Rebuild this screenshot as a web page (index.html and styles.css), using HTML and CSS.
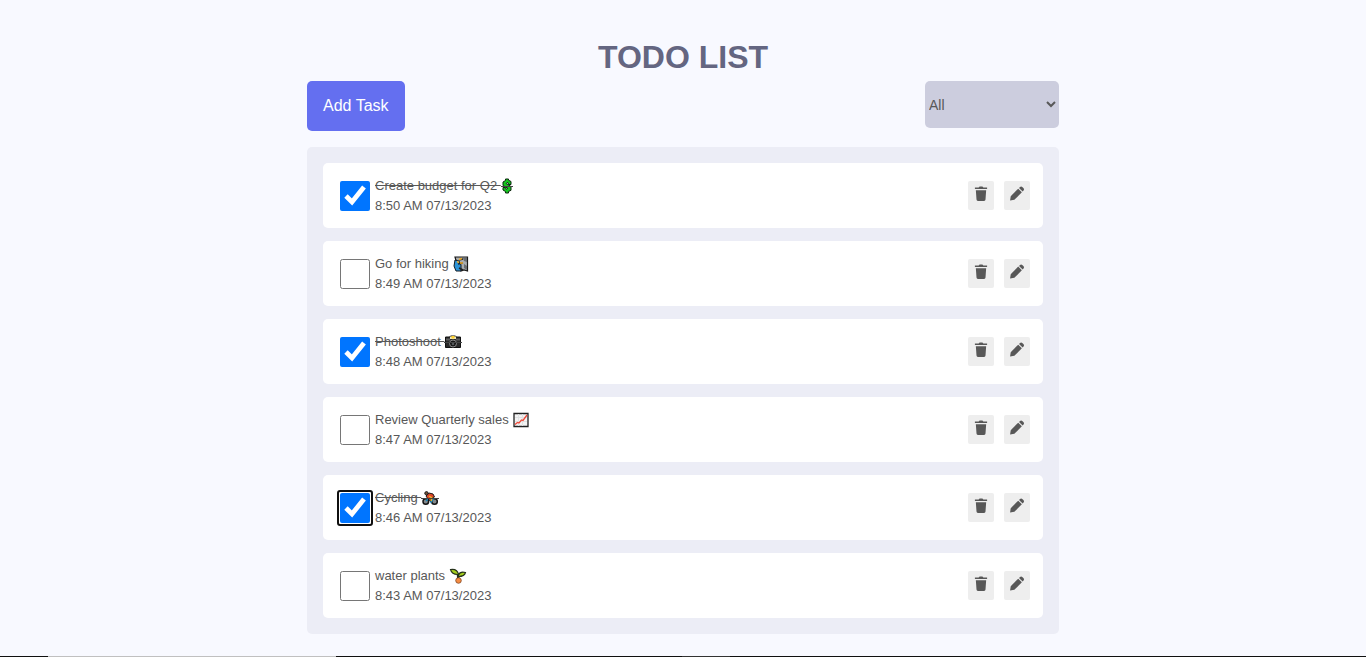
FILE: index.html
```
<!DOCTYPE html>
<html lang="en">
<head>
<meta charset="utf-8">
<meta name="viewport" content="width=device-width, initial-scale=1">
<title>Todo List</title>
<link rel="stylesheet" href="styles.css">
</head>
<body>
<svg class="sprite" aria-hidden="true">
  <symbol id="trash" viewBox="0 0 14 16">
    <path d="M.5 1.500h4l1-1h3l1 1h4v1.800H.5z"/>
    <path d="M1.500 4.500h11l-.7 10Q11.700 16 10.300 16H3.700Q2.300 16 2.200 14.500z"/>
  </symbol>
  <symbol id="pencil" viewBox="0 0 16 16">
    <path d="M.6 15.400l.7-4.600 8-8 3.900 3.900-8 8z"/>
    <path d="M10.200 2l1-1q1.300-1.100 2.700.2l.9.900q1.300 1.400.2 2.700l-1 1z"/>
  </symbol>
</svg>
<main class="page">
  <h1 class="title">TODO LIST</h1>
  <div class="toolbar">
    <button class="add" type="button">Add Task</button>
    <select class="filter" aria-label="Filter tasks">
      <option>All</option>
      <option>Incomplete</option>
      <option>Complete</option>
    </select>
  </div>
  <ul class="list">
    <li class="task">
      <input class="check" type="checkbox" id="t1" checked>
      <div class="info">
        <label class="name done" for="t1">Create budget for Q2 <svg class="emoji narrow" viewBox="0 0 10 16" role="img" aria-label="dollar"><path d="M3.500 1h3v1.200L9 3.500v3H6.500V5.200L5 4.500l-.8 1 4.800 3v3.800l-2.500 1.200V15h-3v-1.500L1 12V9.500h2.500v1l1.500.7.800-1L1 7.500V4l2.500-1.500z" fill="#12c81c" stroke="#0b260d" stroke-width="1"/><path class="strike" d="M-1 8.500h12"/></svg></label>
        <p class="time">8:50 AM 07/13/2023</p>
      </div>
      <div class="actions">
        <button class="action" type="button" aria-label="Delete"><svg class="trash"><use href="#trash"/></svg></button>
        <button class="action" type="button" aria-label="Edit"><svg class="pencil"><use href="#pencil"/></svg></button>
      </div>
    </li>
    <li class="task">
      <input class="check" type="checkbox" id="t2">
      <div class="info">
        <label class="name" for="t2">Go for hiking <svg class="emoji" viewBox="0 0 16 16" role="img" aria-label="hiking"><path d="M2 1h12.500v14L11 14 8 15 4 8z" fill="#a9adb0" stroke="#191919" stroke-width="1.200"/><path d="M10 2h4v4l-3-1zM11 8l3 2v4l-3-2z" fill="#686d71"/><path d="M2 4l4 1 2 4v6H3L1 10z" fill="#2c93d6" stroke="#141b22"/><path d="M6 4l4-1M5 8l5-1M6 12l4 2" stroke="#222" stroke-width="1.500"/><path d="M6 3.500l3-1M7 7h3M4 5.500l2 1" stroke="#f0ad27" stroke-width="1.500"/></svg></label>
        <p class="time">8:49 AM 07/13/2023</p>
      </div>
      <div class="actions">
        <button class="action" type="button" aria-label="Delete"><svg class="trash"><use href="#trash"/></svg></button>
        <button class="action" type="button" aria-label="Edit"><svg class="pencil"><use href="#pencil"/></svg></button>
      </div>
    </li>
    <li class="task">
      <input class="check" type="checkbox" id="t3" checked>
      <div class="info">
        <label class="name done" for="t3">Photoshoot <svg class="emoji" viewBox="0 0 16 16" role="img" aria-label="camera"><path d="M.5 3h4l1-1h5l1 1h4v10.500H.5z" fill="#292929" stroke="#111"/><path d="M1 4.500h4v2H1zM11 4.500h4v2h-4z" fill="#5d5d5d"/><path d="M5 2.500h6v2.500H5z" fill="#eee5bd"/><path d="M6.500 2h3v2.500h-3z" fill="#ffd22b"/><circle cx="8" cy="9.500" r="3.500" fill="#161616" stroke="#898989"/><circle cx="8" cy="10" r="1.300" fill="#55595c"/><path class="strike" d="M-1 8.500h18"/></svg></label>
        <p class="time">8:48 AM 07/13/2023</p>
      </div>
      <div class="actions">
        <button class="action" type="button" aria-label="Delete"><svg class="trash"><use href="#trash"/></svg></button>
        <button class="action" type="button" aria-label="Edit"><svg class="pencil"><use href="#pencil"/></svg></button>
      </div>
    </li>
    <li class="task">
      <input class="check" type="checkbox" id="t4">
      <div class="info">
        <label class="name" for="t4">Review Quarterly sales <svg class="emoji" viewBox="0 0 16 16" role="img" aria-label="chart"><path d="M1 1.500h14v13H1z" fill="#f3f3f3" stroke="#222" stroke-width="1.300"/><path d="M2 5.500h12M2 9.500h12M5.500 2v12M9.500 2v12" stroke="#e0e2e3"/><path d="M2 12.500l2.500-2 1.500.5 2.500-3 1.500.5L14 3" fill="none" stroke="#ef4938" stroke-width="1.300"/></svg></label>
        <p class="time">8:47 AM 07/13/2023</p>
      </div>
      <div class="actions">
        <button class="action" type="button" aria-label="Delete"><svg class="trash"><use href="#trash"/></svg></button>
        <button class="action" type="button" aria-label="Edit"><svg class="pencil"><use href="#pencil"/></svg></button>
      </div>
    </li>
    <li class="task">
      <input class="check focused" type="checkbox" id="t5" checked>
      <div class="info">
        <label class="name done" for="t5">Cycling <svg class="emoji" viewBox="0 0 16 16" role="img" aria-label="cyclist"><circle cx="3.800" cy="11.500" r="2.800" fill="#83888b" stroke="#151515" stroke-width="1.500"/><circle cx="12.500" cy="11.500" r="2.800" fill="#83888b" stroke="#151515" stroke-width="1.500"/><path d="M4 11l3-3 2 4 3-4" fill="none" stroke="#1685bd" stroke-width="1.500"/><path d="M4 6l3-3 4 1 1.500 3-3 1-1 3L6 9z" fill="#df4527" stroke="#201713"/><path d="M7 6l3 2-1 3" fill="none" stroke="#efb628" stroke-width="1.500"/><circle cx="4.500" cy="3.300" r="1.700" fill="#725039" stroke="#1c1c1c"/><path class="strike" d="M-1 8.500h18"/></svg></label>
        <p class="time">8:46 AM 07/13/2023</p>
      </div>
      <div class="actions">
        <button class="action" type="button" aria-label="Delete"><svg class="trash"><use href="#trash"/></svg></button>
        <button class="action" type="button" aria-label="Edit"><svg class="pencil"><use href="#pencil"/></svg></button>
      </div>
    </li>
    <li class="task">
      <input class="check" type="checkbox" id="t6">
      <div class="info">
        <label class="name" for="t6">water plants <svg class="emoji" viewBox="0 0 16 16" role="img" aria-label="seedling"><path d="M8.500 12L8 7" stroke="#25351a" stroke-width="2.500"/><path d="M.5 1.500q7-1 8 5Q2 7 .5 1.500zM8.500 7Q10 3 15.500 4.500q-1 4-7 4z" fill="#a5cf1c" stroke="#26321b" stroke-width="1.100"/><circle cx="8.500" cy="12.500" r="2.800" fill="#f58c43" stroke="#703b1b" stroke-width=".7"/></svg></label>
        <p class="time">8:43 AM 07/13/2023</p>
      </div>
      <div class="actions">
        <button class="action" type="button" aria-label="Delete"><svg class="trash"><use href="#trash"/></svg></button>
        <button class="action" type="button" aria-label="Edit"><svg class="pencil"><use href="#pencil"/></svg></button>
      </div>
    </li>
  </ul>
</main>
<div class="edge"></div>
</body>
</html>
```
FILE: styles.css
```
* { box-sizing: border-box; }
body {
  margin: 0;
  min-height: 100vh;
  display: flex;
  flex-direction: column;
  justify-content: space-between;
  background: #f8f9ff;
  color: #585858;
  font-family: "Liberation Sans", Arial, sans-serif;
}
.sprite { display: none; }
.page {
  width: 100%;
  max-width: 784px;
  margin: 0 auto;
  padding: 34px 16px 22px;
}
.title {
  margin: 0;
  color: #646681;
  font-size: 32px;
  line-height: 47px;
  text-align: center;
}
.toolbar {
  display: flex;
  align-items: flex-start;
  justify-content: space-between;
  margin-bottom: 16px;
}
.add {
  height: 50px;
  padding: 0 16px;
  border: 0;
  border-radius: 5px;
  background: #646ff0;
  color: #fff;
  font: 16px "Liberation Sans", Arial, sans-serif;
}
.filter {
  width: 134px;
  height: 47px;
  border: 0;
  border-radius: 5px;
  background: #cccdde;
  color: #585858;
  font: 14px "Liberation Sans", Arial, sans-serif;
}
.list {
  display: grid;
  gap: 13px;
  margin: 0;
  padding: 16px;
  border-radius: 5px;
  background: #ecedf6;
  list-style: none;
}
.task {
  display: flex;
  align-items: center;
  gap: 5px;
  padding: 12px 13px 12px 17px;
  border-radius: 5px;
  background: #fff;
}
.check {
  flex: none;
  width: 30px;
  height: 30px;
  margin: 0;
}
.focused {
  outline: 1px auto -webkit-focus-ring-color;
  outline-offset: 2px;
}
.info {
  flex: 1;
  min-width: 0;
  padding-top: 1px;
  font-size: 13px;
  line-height: 20px;
}
.name {
  display: flex;
  align-items: center;
  white-space: pre;
}
.done { text-decoration: line-through; }
.emoji {
  flex: none;
  width: 16px;
  height: 16px;
  margin-left: 1px;
  overflow: visible;
}
.narrow { width: 10px; }
.strike { stroke: #444; stroke-width: 1; fill: none; }
.time { margin: 0; }
.actions { display: flex; gap: 10px; }
.action {
  display: flex;
  align-items: flex-start;
  justify-content: center;
  width: 26px;
  height: 29px;
  padding: 5px 0 0;
  border: 0;
  border-radius: 2px;
  background: #eee;
  color: #585858;
}
.action svg { fill: currentColor; }
.trash { width: 14px; height: 15px; }
.pencil { width: 16px; height: 15px; }
.edge {
  height: 1px;
  background: linear-gradient(to right, #101010 48px, #c0c0c0 48px 336px, #101010 336px 682px, #333 682px 730px, #101010 730px);
}
```
